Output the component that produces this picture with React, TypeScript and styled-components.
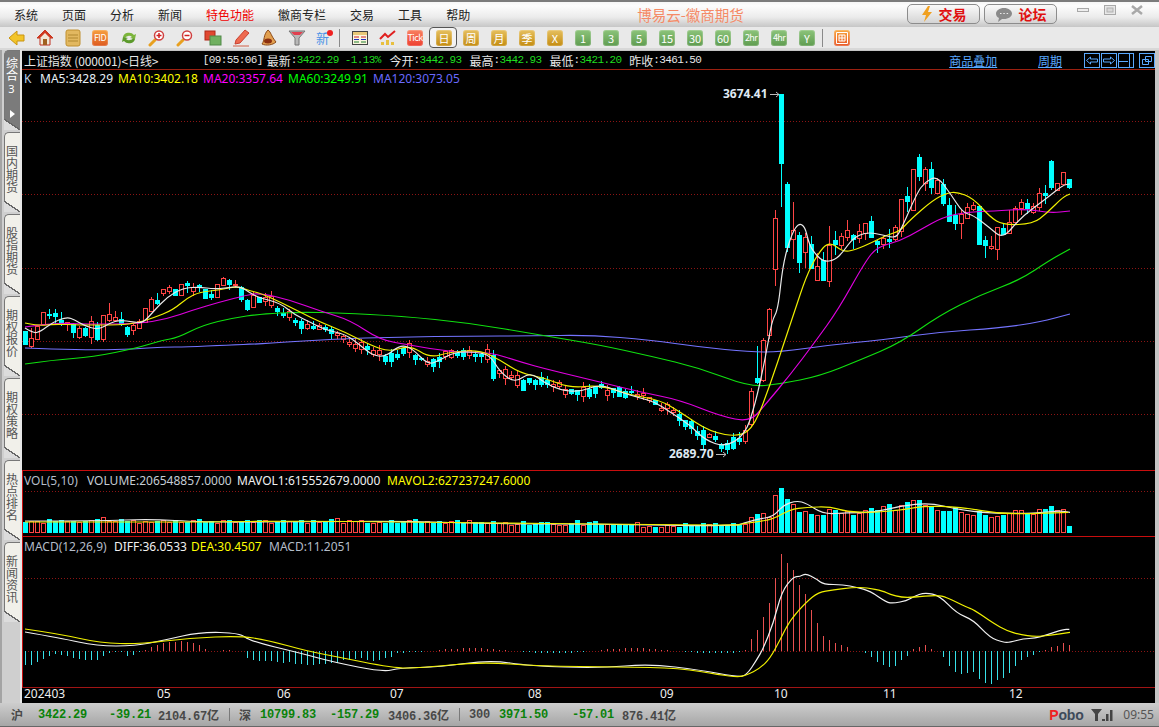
import React from "react";
import styled, { createGlobalStyle } from "styled-components";

const Global = createGlobalStyle`
  html, body { margin: 0; padding: 0; background: #c4c4c4; }
  * { box-sizing: border-box; }
`;
const CJK = `"Noto Sans CJK SC", "Noto Sans", sans-serif`;
const UI = `"Noto Sans", "Noto Sans CJK SC", sans-serif`;
const MONO = `"Liberation Mono", "Noto Sans CJK SC", monospace`;

const Window = styled.div`
  width: 1159px; height: 727px; overflow: hidden; display: flex; flex-direction: column;
  background: #c4c4c4; font-family: ${CJK}; font-size: 12px;
`;
const TitleBar = styled.div`
  height: 27px; flex: none; display: flex; align-items: center; padding-left: 14px;
  border-top: 2px solid #7c7c7c;
  background: linear-gradient(#f6f6f6 0%, #fdfdfd 15%, #ececec 60%, #c6c6c6 100%);
`;
const Menu = styled.nav`display: flex; gap: 24px; color: #222; font-size: 12px; line-height: 16px;`;
const MenuItem = styled.span<{ $hot?: boolean }>`color: ${p => (p.$hot ? "#f00000" : "#222")};`;
const AppTitle = styled.div`margin-left: 167px; color: #f58a66; font-size: 14.5px; white-space: nowrap;`;
const Actions = styled.div`margin-left: auto; display: flex; gap: 4px; margin-top: -1px;`;
const ActionButton = styled.button`
  width: 73px; height: 20px; padding: 0; display: flex; align-items: center; justify-content: center; gap: 6px;
  border: 1px solid #8c8c8c; border-radius: 5px; color: #e01010; font: 700 14px ${CJK};
  background: linear-gradient(#fafafa, #d4d4d4);
`;
const Controls = styled.div`width: 90px; margin-left: 12px; padding-right: 9px; display: flex; height: 24px; margin-top: -10px;`;
const Control = styled.span`flex: 1; display: flex; align-items: center; justify-content: center;`;

const Toolbar = styled.div`
  height: 23px; flex: none; display: flex; align-items: center; padding-left: 8px;
  background: #e9e9e9; border-bottom: 2px solid #d8d8d8;
`;
const Slot = styled.span<{ $selected?: boolean }>`
  width: 28px; height: 21px; flex: none; display: flex; align-items: center; padding-left: ${p => (p.$selected ? 6 : 0)}px;
  margin-left: ${p => (p.$selected ? -6 : 0)}px; margin-right: ${p => (p.$selected ? 6 : 0)}px;
  ${p => p.$selected && "border: 1px solid #555; border-radius: 4px; background:#f3f3f3;"}
`;
const Sep = styled.span`width: 1px; height: 18px; background: #8a8a8a; flex: none; margin: 0 11px 0 -5px;`;
const Chip = styled.span<{ $c: string; $d: string; $narrow?: boolean }>`
  width: 16px; height: 16px; border-radius: 3px; display: flex; align-items: center; justify-content: center;
  background: linear-gradient(${p => p.$c}, ${p => p.$d}); color: #fff; line-height: 16px; white-space: nowrap; overflow: hidden;
  font: ${p => (p.$narrow ? "9px" : "11px")} ${CJK};
  ${p => p.$narrow && "letter-spacing:-0.6px;"}
  box-shadow: inset 0 0 0 1px rgba(255,255,255,.18);
`;
const NewMark = styled.span`position: relative; color: #4b93e6; font-size: 13px; line-height: 16px;
  &::after { content: ""; position: absolute; width: 6px; height: 6px; border-radius: 50%; background: #f02020; right: -4px; top: 0; }`;

const Main = styled.div`flex: 1; min-height: 0; display: flex; background: #c4c4c4;`;
const Rail = styled.div`
  width: 22px; flex: none; padding-left: 4px; display: flex; flex-direction: column; gap: 2px;
  background: linear-gradient(90deg, #a4a4a4 0 2px, #cfcfcf 2px 20px, #e6e6e6 20px);
`;
const Tab = styled.div<{ $active?: boolean }>`
  width: 16px; height: 80px; flex: none; position: relative; padding-top: ${p => (p.$active ? 6 : 12)}px;
  display: flex; flex-direction: column; align-items: center;
  border-radius: 5px 0 0 0; border-top: 1px solid #777; border-left: 1px solid #777;
  background: ${p => (p.$active ? "#7b7b7b" : "#f1f0ea")}; color: ${p => (p.$active ? "#fff" : "#555")};
  &::after {
    content: ""; position: absolute; left: -1px; right: 0; bottom: 0; height: 11px;
    background: linear-gradient(to top right, #dcdcdc 0 46%, #666 46% 54%, ${p => (p.$active ? "#7b7b7b" : "#f1f0ea")} 54%);
  }
`;
const TabText = styled.span`writing-mode: vertical-rl; text-orientation: upright; font-size: 12px; line-height: 14px; letter-spacing: 0.2px; margin-left: -2px;`;
const TabNum = styled.span`font: 11px ${UI}; line-height: 14px; margin-top: 1px; margin-left: -2px;`;
const TabArrow = styled.span`
  position: absolute; left: 5px; top: 59px; width: 0; height: 0;
  border-left: 5px solid #fff; border-top: 4px solid transparent; border-bottom: 4px solid transparent;
`;

const ChartPanel = styled.section`width: 1133px; flex: none; margin-top: 1px; background: #000; display: flex; flex-direction: column; position: relative;`;
const InfoRow = styled.header`
  height: 19px; flex: none; display: flex; align-items: center; padding-left: 2px; border-bottom: 1px solid #9c2010;
  color: #e6e6e6; font-size: 12px; white-space: nowrap;
`;
const Symbol = styled.span`width: 179px; font-size: 12px; letter-spacing: -0.1px;`;
const Mono = styled.span<{ $c?: string; $w?: number }>`
  font: 11px ${MONO}; letter-spacing: -0.6px; color: ${p => p.$c || "#e6e6e6"};
  ${p => p.$w && `width: ${p.$w}px;`}
`;
const Quote = styled.span<{ $w: number }>`width: ${p => p.$w}px; display: flex; align-items: center;`;
const Spacer = styled.span`width: 232px; flex: none;`;
const LinkText = styled.a<{ $w: number }>`width: ${p => p.$w}px; color: #5aa9ff; text-decoration: underline; font-size: 12px;`;
const Tools = styled.span`display: flex; gap: 1px;`;
const ToolBtn = styled.span<{ $gap?: boolean }>`width: 16px; height: 15px; display: block; ${p => p.$gap && "margin-left: 4px;"}`;

const Plot = styled.div`flex: 1; position: relative; min-height: 0;`;
const Chart = styled.svg`display: block; width: 1133px; height: 633px;`;
const Legend = styled.div<{ $top: number }>`
  position: absolute; left: 2px; top: ${p => p.$top}px; display: flex; font: 12px/16px ${UI}; white-space: nowrap;
`;
const LegendItem = styled.span<{ $c: string; $w: number }>`color: ${p => p.$c}; width: ${p => p.$w}px;`;
const Peak = styled.span<{ $x: number; $y: number }>`
  position: absolute; left: ${p => p.$x}px; top: ${p => p.$y}px; color: #dfe8f2; font: 700 12px/14px ${UI}; white-space: nowrap;
`;
const DateTick = styled.span<{ $x: number }>`position: absolute; left: ${p => p.$x}px; top: 616px; color: #eee; font: 12px/16px ${UI};`;

const StatusBar = styled.footer`
  height: 24px; flex: none; display: flex; align-items: center; padding-left: 11px; position: relative;
  background: linear-gradient(#cdcdcd, #a6a6a6); border-bottom: 1px solid #666; white-space: nowrap;
`;
const Cell = styled.span<{ $w: number; $c?: string }>`
  width: ${p => p.$w}px; flex: none; color: ${p => p.$c || "#484848"};
  font: 700 12px ${MONO}; letter-spacing: -0.2px;
`;
const Pipe = styled.span`width: 1px; height: 13px; background: #7a7a7a; flex: none; margin-right: 9px;`;
const Right = styled.div`margin-left: auto; display: flex; align-items: center; padding-right: 5px;`;
const Pobo = styled.span`font: 700 14px/16px "Liberation Sans", sans-serif; color: #3d4a5a; width: 42px; letter-spacing: -0.2px;`;
const PoboP = styled.b`color: #f02020;`;
const Clock = styled.span`font: 12px/16px ${UI}; color: #555; margin-left: 10px;`;

/* ---------- data, in page coordinates ---------- */
const X = (i: number) => 25.5 + 6 * i;
const smooth = (a: number[][]): string => {
  let d = `M${a[0][0]} ${a[0][1]}`;
  for (let k = 1; k < a.length - 1; k++) {
    const mx = (a[k][0] + a[k + 1][0]) / 2, my = (a[k][1] + a[k + 1][1]) / 2;
    d += `Q${a[k][0]} ${a[k][1]} ${mx} ${my}`;
  }
  const e = a[a.length - 1];
  return `${d}L${e[0]} ${e[1]}`;
};
const interp = (path: number[][], x: number) => {
  for (let k = 1; k < path.length; k++) {
    if (x <= path[k][0]) {
      const [x0, y0] = path[k - 1], [x1, y1] = path[k];
      return y0 + ((y1 - y0) * (x - x0)) / (x1 - x0);
    }
  }
  return path[path.length - 1][1];
};
let seed = 12345;
const rnd = () => { seed = (seed * 1103515245 + 12345) & 0x7fffffff; return seed / 0x7fffffff; };

// [up, bodyTop, bodyBottom, high, low]
type C = [number, number, number, number, number];
const Y0 = 270;
const L = (u: number, t: number, b: number, h?: number, l?: number): C => [u, Y0 + t / 3, Y0 + b / 3, Y0 + (h ?? t) / 3, Y0 + (l ?? b) / 3];
const head: C[] = [
  L(0,183,222),L(1,203,228,175,231),L(1,168,206),L(1,127,162),L(0,131,133,117,143),L(0,130,137,118,160),L(0,150,162,126,165),L(1,157,163,155,180),
  L(0,163,186,160,201),L(1,175,201,168,203),L(0,175,195,170,199),L(1,152,200,138,218),L(0,165,207,155,209),L(1,136,207,134,213),L(1,132,150,99,153),L(1,142,150,124,152),
  L(0,148,163,126,165),L(0,171,191,168,197),L(1,165,181,160,193),L(1,152,173,148,175),L(1,114,155),L(1,88,122,81,124),L(0,90,99,69,101),L(1,58,68,56,76),
  L(1,50,64,45,68),L(0,57,75),L(1,42,74),L(0,40,46,32,66),L(1,52,62,40,75),L(0,46,52,42,62),L(0,58,84),L(0,72,82,60,88),
  L(1,43,80),L(1,24,44,20,46),L(0,30,42,28,56),L(1,41,43,30,50),L(0,50,86,48,92),L(0,90,117,88,120),L(1,75,110,65,112),L(0,80,96),
];
const midPath = [[265,298],[290,316],[310,325],[340,334],[360,347],[385,358],[410,350],[430,367],[450,352],[485,352],[500,372],[520,383],[545,380],[570,390],[600,388],[640,396],[670,410],[700,432],[725,445],[745,436]];
const mid: C[] = [];
for (let i = 40; i < 120; i++) {
  const m = interp(midPath, X(i)) + (rnd() - 0.5) * 7;
  const h = 1.5 + rnd() * rnd() * 13;
  const t = m - h / 2, b = m + h / 2;
  mid.push([rnd() > 0.5 ? 1 : 0, t, b, t - rnd() * 6, b + rnd() * 6]);
}
mid[78 - 40] = [0, 355, 378, 350, 380];
mid[117 - 40] = [0, 443, 449, 440, 453];
const tail: C[] = [
  [1,430,441,425,443],[1,391,424,388,425],[0,378,382,346,383],[1,340,380,338,381],[1,309,335,308,338],
  [1,218,269,210,285],[0,94,163,94,206],[0,184,247,182,251],[1,230,239,202,258],[0,235,262,232,272],[1,237,252,233,267],[0,244,268,236,268],[1,266,280,253,280],[0,260,280,252,280],[1,245,281,226,286],
  [0,240,244,231,254],[1,236,245,233,248],[1,230,237,220,240],[0,235,239,234,248],[1,231,238,224,242],[1,223,233,223,239],[0,221,237,216,237],[0,241,244,240,252],[1,238,244,236,248],[0,239,241,229,247],[1,227,239,225,240],
  [1,199,231,199,236],[0,196,201,187,211],[1,169,210,169,210],[0,157,176,154,180],[1,169,183,167,190],[0,169,187,162,193],[1,180,193,178,193],[0,184,203,179,205],[0,205,221,198,221],[0,215,223,205,229],[1,214,223,210,238],[1,207,218,203,218],[1,205,209,202,210],
  [0,206,244,206,244],[0,240,245,236,257],[1,246,248,236,249],[1,227,249,227,259],[0,228,234,224,234],[1,222,233,210,233],[1,208,222,206,222],[1,202,208,199,214],[0,203,208,199,213],[1,206,212,203,213],[1,193,207,188,210],[0,193,195,185,203],[0,161,187,160,189],[1,183,190,183,190],[1,172,184,172,184],[0,179,187,179,188],
];
const candles: C[] = [...head, ...mid, ...tail];

const volTail = [133,112,102,100,110,45,24,57,72,96,94,102,105,104,88,90,100,94,105,100,90,84,90,78,72,90,76,66,60,60,75,78,90,92,92,82,95,102,105,92,104,111,108,106,100,90,90,98,102,87,87,78,90,88,138];
const volTop = (i: number) => {
  if (i >= 120) return 480 + volTail[i - 120] / 3;
  const x = X(i);
  const base = x > 640 ? 525 : x > 480 ? 523 : 521;
  return Math.round(base + (rnd() - 0.5) * 4) - (rnd() > 0.93 ? 3 : 0);
};
const macdTail = [510,477,450,410,369,295,222,249,270,315,342,390,430,468,480,489,495,501,514,513,519,531,546,555,561,558,540,528,507,501,495,507,514,531,558,576,582,579,576,597,609,612,600,594,579,558,540,531,525,516,510,501,498,489,495];
const macdHead = [75,75,67,57,47,42,46,47,53,57,59,60,59,48,39,36,35,48,44,36,30,22,16,10,7,7,3,7,8,15,27,32,33,31,31,33,34,55,60,63,62,62,65,70,65,72,72,75,75,72,72,68,68,60,60,58,55,60,62,60,55,52,40,38,37,36,35];
const macdVal = (i: number) => {
  if (i >= 120) return 480 + macdTail[i - 120] / 3;
  const z = 651.3;
  if (i < macdHead.length) return z + (macdHead[i] - 34) / 3;
  return z + Math.sin(i / 4.3) * 2.5 - 0.5;
};
const Z = (a: number[][]) => a.map(p => [740 + p[0] / 3, 480 + p[1] / 3]);

const ma5 = [[25,328],[33,333],[40,332],[53,322],[67,317],[75,320],[83,325],[98,330],[110,323],[120,320],[133,322],[143,323],[153,312],[167,297],[183,288],[200,287],[213,289],[227,288],[240,286],[250,293],[260,298],[280,303],[295,315],[310,322],[325,330],[345,334],[360,345],[372,355],[385,357],[400,345],[412,348],[428,365],[440,360],[455,352],[475,352],[490,355],[500,372],[515,383],[530,372],[545,383],[560,390],[580,392],[600,384],[620,392],[640,398],[655,402],[670,412],[690,425],[705,440],[725,447],[745,435],[755,405],[765,360],[772,320],[778,310],[783,263],[792,233],[799,223],[805,227],[808,240],[812,250],[823,262],[835,260],[843,252],[853,238],[867,232],[883,235],[895,238],[900,232],[917,193],[925,182],[937,176],[950,193],[963,213],[973,215],[990,228],[1003,239],[1020,218],[1047,198],[1063,185],[1070,184]];
const ma10 = [[25,323],[40,326],[53,324],[80,325],[120,325],[137,323],[153,318],[173,310],[187,298],[200,292],[220,290],[237,286],[250,291],[260,293],[280,302],[300,312],[320,322],[345,332],[370,345],[390,352],[410,345],[430,358],[450,352],[480,350],[500,360],[520,373],[545,378],[570,388],[600,385],[630,395],[660,400],[680,412],[710,432],[740,437],[755,425],[770,385],[785,340],[795,310],[806,277],[817,255],[829,241],[843,252],[855,250],[873,242],[887,235],[900,231],[910,220],[933,200],[947,193],[957,192],[973,198],[990,217],[1003,225],[1033,224],[1047,213],[1063,197],[1070,194]];
const ma20 = [[25,327],[53,323],[87,324],[137,324],[167,319],[193,310],[220,302],[247,295],[260,293],[290,300],[320,311],[350,320],[380,340],[410,345],[450,352],[490,352],[520,362],[550,370],[600,382],[640,392],[680,400],[720,416],[750,422],[765,405],[790,375],[815,342],[838,310],[865,262],[877,247],[900,241],[920,230],[943,217],[967,212],[993,211],[1027,209],[1050,213],[1070,211]];
const ma60 = [[25,364],[53,360],[93,357],[137,348],[163,340],[177,338],[203,325],[233,318],[260,314],[300,312],[340,313],[400,316],[470,323],[540,335],[600,345],[650,356],[700,368],[750,387],[780,384],[820,376],[860,360],[900,343],[940,315],[980,295],[1020,280],[1050,260],[1070,249]];
const ma120 = [[25,348],[53,349],[97,350],[133,349],[163,347],[187,347],[227,345],[260,344],[330,339],[400,337],[470,336],[530,336],[590,335],[650,340],[700,347],[750,352],[780,352],[830,345],[880,340],[940,332],[1000,328],[1040,322],[1070,314]];
const vol1 = [[25,521],[100,521],[150,519],[200,522],[300,522],[400,521],[500,524],[600,524],[700,526],[738,525],...Z([[0,133],[50,118],[100,110],[130,75],[170,62],[200,70],[250,103],[320,98],[400,98],[480,78],[570,68],[650,88],[750,100],[880,100],[960,92],[990,97]])];
const vol2 = [[25,522],[100,522],[200,522],[300,521],[400,522],[500,523],[600,524],[700,525],[738,525],...Z([[0,133],[50,125],[100,118],[150,88],[200,82],[270,80],[320,95],[400,98],[500,88],[550,78],[660,80],[780,102],[900,100],[985,97]])];
const diff = [[25,632],[60,638],[97,646],[135,646],[165,640],[200,632],[240,633],[250,641],[300,653],[333,662],[383,672],[400,668],[440,667],[490,660],[530,666],[600,668],[650,664],[700,670],[738,677],...Z([[20,585],[50,540],[70,505],[100,430],[125,335],[160,290],[180,290],[197,280],[230,297],[250,313],[310,314],[350,322],[390,333],[440,367],[460,370],[500,362],[520,350],[555,337],[600,348],[650,400],[700,420],[750,473],[790,487],[810,487],[850,476],[885,475],[920,465],[970,448],[988,448]])];
const dea = [[25,629],[60,634],[100,643],[140,644],[190,638],[240,636],[267,640],[307,651],[333,656],[393,668],[420,668],[480,662],[540,666],[620,667],[680,668],[720,675],[738,677],...Z([[20,586],[60,565],[90,535],[120,480],[150,420],[200,365],[235,337],[280,330],[340,322],[380,323],[430,333],[450,343],[485,352],[520,352],[590,345],[620,352],[680,382],[700,388],[760,430],[800,452],[840,464],[885,470],[930,466],[990,457]])];

const RED = "#ff4545";
const CYAN = "#00ffff";

const candleNodes = candles.map((c, i) => {
  const [up, t, b, h, l] = c;
  const x = X(i), col = up ? RED : CYAN;
  const top = Math.round(t) + 0.5, bot = Math.max(Math.round(b), Math.round(t) + 1) + 0.5;
  return (
    <g key={i}>
      <line x1={x} x2={x} y1={Math.round(h)} y2={top} stroke={col} />
      <line x1={x} x2={x} y1={bot} y2={Math.round(l) + 1} stroke={col} />
      <rect x={x - 2} y={top} width={4} height={bot - top} fill={up ? "#000" : col} stroke={col} />
    </g>
  );
});
const volNodes = candles.map((c, i) => {
  const t = Math.round(volTop(i)) + 0.5, up = c[0], x = X(i);
  return <rect key={i} x={x - 2} y={t} width={4} height={532.5 - t} fill={up ? "#000" : CYAN} stroke={up ? RED : CYAN} />;
});
const macdNodes = candles.map((_, i) => {
  const v = macdVal(i);
  const x = X(i);
  return <line key={i} x1={x} x2={x} y1={651} y2={v} stroke={v < 651 ? "#e85050" : "#38e0e8"} />;
});

const Dotted = ({ y }: { y: number }) => <line x1={22} x2={1155} y1={y + 0.5} y2={y + 0.5} stroke="#8c1414" strokeDasharray="1 2" />;
const Solid = ({ y, c = "#c80e0e" }: { y: number; c?: string }) => <line x1={22} x2={1155} y1={y + 0.5} y2={y + 0.5} stroke={c} />;
const Line = ({ p, c, w = 1.2 }: { p: number[][]; c: string; w?: number }) => <path d={smooth(p)} fill="none" stroke={c} strokeWidth={w} />;

/* ---------- toolbar icons ---------- */
const Ico = ({ children, w = 18 }: { children: React.ReactNode; w?: number }) => <svg width={w} height={18} viewBox="0 0 18 18">{children}</svg>;
const Back = () => <Ico><path d="M1 9 9 2v4h7v6H9v4z" fill="#f2c428" stroke="#c99410" /></Ico>;
const Home = () => <Ico><path d="M9 1 1 9h3v7h10V9h3z" fill="#f0e8d8" stroke="#c03020" /><path d="M9 1 1 9h3l5-5 5 5h3z" fill="#d03a20" /><rect x="7" y="10" width="4" height="6" fill="#a06020" /></Ico>;
const Note = () => <Ico><rect x="2" y="1" width="14" height="16" rx="2" fill="#e2b860" stroke="#c09030" /><path d="M4 6h10M4 9h10M4 12h10" stroke="#b08830" /></Ico>;
const Fid = () => <Chip $c="#f7a040" $d="#dd5a20" $narrow>FID</Chip>;
const Refresh = () => <Ico><path d="M3 8a6 5 0 0 1 11-2l2-1-1 5-5-1 2-1a4 3 0 0 0-7 1z" fill="#7cb53c" /><path d="M15 10a6 5 0 0 1-11 2l-2 1 1-5 5 1-2 1a4 3 0 0 0 7-1z" fill="#5c9a2c" /></Ico>;
const Lens = ({ plus }: { plus?: boolean }) => (
  <Ico>
    <path d="M7 11 2 16" stroke="#e8a020" strokeWidth="3" strokeLinecap="round" />
    <circle cx="11" cy="6.500" r="4.500" fill="#fff" stroke="#d04040" strokeWidth="1.500" />
    <path d="M8.500 6.500h5" stroke="#d02020" strokeWidth="1.500" />
    {plus && <path d="M11 4v5" stroke="#d02020" strokeWidth="1.500" />}
  </Ico>
);
const Wins = () => <Ico><rect x="1" y="2" width="10" height="9" fill="#e04830" stroke="#b02818" /><rect x="6" y="7" width="11" height="9" fill="#70b060" stroke="#508a48" /></Ico>;
const Pen = () => <Ico><path d="M4 11 13 1l4 3-9 10-5 1z" fill="#ee6a50" stroke="#c84030" /><path d="M1 17h16" stroke="#d06048" /></Ico>;
const Bell = () => <Ico><path d="M8 1c3 2 3 6 8 12-3 3-10 4-14 2C5 11 3 6 8 1z" fill="#e2a050" stroke="#8c4a18" /><ellipse cx="8" cy="12" rx="4" ry="2.500" fill="#8c3010" /></Ico>;
const Funnel = () => <Ico><path d="M1 2h16l-6 7v7H7V9z" fill="#b8b8b8" stroke="#777" /><path d="M3 3h12l-3 3H6z" fill="#e04050" /></Ico>;
const Table = () => <Ico><rect x="1.500" y="2.500" width="15" height="13" fill="#fbf6e0" stroke="#444" /><path d="M2 3h14v3H2z" fill="#e8c878" /><path d="M3 8h5M10 8h5" stroke="#d02020" /><path d="M3 10.500h5M10 10.500h5" stroke="#2030c0" /><path d="M3 13h5M10 13h5" stroke="#208030" /></Ico>;
const Trend = () => <Ico><path d="M2 16v-3h3v3zM7 16v-5h3v5zM12 16v-3h3v3z" fill="#e8c040" /><path d="M1 10 6 5l3 3 7-6" fill="none" stroke="#e02020" strokeWidth="2" /></Ico>;
const Frame = () => <Chip $c="#f8a840" $d="#e85828"><svg width="12" height="12" viewBox="0 0 12 12"><path d="M.5.500h11v11H.5zM3 3h6v6H3zM6 3v6M3 6h6" fill="none" stroke="#fff" /></svg></Chip>;

const G = (t: string, narrow?: boolean) => <Chip $c="#8cc47a" $d="#5f9c50" $narrow={narrow}>{t}</Chip>;
const Gold = (t: string) => <Chip $c="#e6c060" $d="#c48c10">{t}</Chip>;

const ArrowBox = ({ k }: { k: string }) => (
  <svg width="16" height="15" viewBox="0 0 16 15">
    <rect x=".5" y=".5" width="15" height="14" fill="none" stroke="#5aa9ff" />
    {k === "l" && <path d="M2.500 7.500 6.500 4v2h7v3h-7v2z" fill="none" stroke="#5aa9ff" />}
    {k === "r" && <path d="M13.500 7.500 9.500 4v2h-7v3h7v2z" fill="none" stroke="#5aa9ff" />}
    {k === "s" && <path d="M1 8.500h9M11.500 1v13" fill="none" stroke="#5aa9ff" />}
    {k === "w" && <path d="M6.500 3.500h6v5h-6zM3.500 6.500h6v5h-6z" fill="#000" stroke="#5aa9ff" />}
  </svg>
);

const tabs = ["国内期货", "股指期货", "期权报价", "期权策略", "热点排名", "新闻资讯"];
const menu = ["系统", "页面", "分析", "新闻", "特色功能", "徽商专栏", "交易", "工具", "帮助"];
const quotes: [string, string, number, string][] = [
  ["今开", "3442.93", 80, "#1fdc1f"], ["最高", "3442.93", 80, "#1fdc1f"], ["最低", "3421.20", 80, "#1fdc1f"], ["昨收", "3461.50", 88, "#e6e6e6"],
];
const dates: [string, number][] = [["202403", 2], ["05", 135], ["06", 255], ["07", 368], ["08", 506], ["09", 638], ["10", 752], ["11", 861], ["12", 987]];
const G1 = "#0a820a";

export default function App() {
  return (
    <Window>
      <Global />
      <TitleBar>
        <Menu>{menu.map(m => <MenuItem key={m} $hot={m === "特色功能"}>{m}</MenuItem>)}</Menu>
        <AppTitle>博易云-徽商期货</AppTitle>
        <Actions>
          <ActionButton>
            <svg width="12" height="16" viewBox="0 0 12 16"><path d="M7 0 1 9h4l-2 7 8-10H7l2-6z" fill="#f0a020" /></svg>交易
          </ActionButton>
          <ActionButton>
            <svg width="18" height="15" viewBox="0 0 18 15"><path d="M9 1c4.500 0 8 2.500 8 5.500S13.500 12 9 12H7l-4 3 1-4C2 10 1 8.500 1 6.500 1 3.500 4.500 1 9 1z" fill="#8a8a8a" /><path d="M5 6.500h1.500M8.300 6.500h1.500M11.600 6.500h1.500" stroke="#eee" /></svg>论坛
          </ActionButton>
        </Actions>
        <Controls>
          <Control><svg width="12" height="6" viewBox="0 0 12 6"><rect x=".5" y="1.500" width="11" height="3" fill="#eee" stroke="#a8a8a8" /></svg></Control>
          <Control><svg width="12" height="10" viewBox="0 0 12 10"><rect x=".5" y=".5" width="11" height="9" fill="#e8e8e8" stroke="#a8a8a8" /><rect x="3" y="3" width="6" height="4" fill="#d8d8d8" stroke="#b0b0b0" /></svg></Control>
          <Control><svg width="12" height="10" viewBox="0 0 12 10"><path d="M1 1l10 8M11 1 1 9" stroke="#a8a8a8" strokeWidth="2.500" /></svg></Control>
        </Controls>
      </TitleBar>
      <Toolbar>
        <Slot><Back /></Slot><Slot><Home /></Slot><Slot><Note /></Slot><Slot><Fid /></Slot><Slot><Refresh /></Slot>
        <Slot><Lens plus /></Slot><Slot><Lens /></Slot><Slot><Wins /></Slot><Slot><Pen /></Slot><Slot><Bell /></Slot><Slot><Funnel /></Slot>
        <Slot><NewMark>新</NewMark></Slot><Sep />
        <Slot><Table /></Slot><Slot><Trend /></Slot>
        <Slot><Chip $c="#f88060" $d="#ee4030" $narrow>Tick</Chip></Slot>
        <Slot $selected>{Gold("日")}</Slot>
        <Slot>{Gold("周")}</Slot><Slot>{Gold("月")}</Slot><Slot>{Gold("季")}</Slot><Slot>{Gold("X")}</Slot>
        <Slot>{G("1")}</Slot><Slot>{G("3")}</Slot><Slot>{G("5")}</Slot><Slot>{G("15")}</Slot><Slot>{G("30")}</Slot><Slot>{G("60")}</Slot>
        <Slot>{G("2hr", true)}</Slot><Slot>{G("4hr", true)}</Slot><Slot>{G("Y")}</Slot><Sep />
        <Slot><Frame /></Slot>
      </Toolbar>
      <Main>
        <Rail>
          <Tab $active>
            <TabText>综合</TabText><TabNum>3</TabNum><TabArrow />
          </Tab>
          {tabs.map(t => <Tab key={t}><TabText>{t}</TabText></Tab>)}
        </Rail>
        <ChartPanel>
          <InfoRow>
            <Symbol>上证指数 (000001)&lt;日线&gt;</Symbol>
            <Mono $w={64}>[09:55:06]</Mono>
            <Quote $w={123}>最新<Mono>:</Mono><Mono $c="#1fdc1f">3422.29 -1.13%</Mono></Quote>
            {quotes.map(([l, v, w, c]) => (
              <Quote key={l} $w={w}>{l}<Mono>:</Mono><Mono $c={c}>{v}</Mono></Quote>
            ))}
            <Spacer />
            <LinkText $w={89}>商品叠加</LinkText>
            <LinkText $w={46}>周期</LinkText>
            <Tools>
              <ToolBtn><ArrowBox k="l" /></ToolBtn><ToolBtn><ArrowBox k="r" /></ToolBtn><ToolBtn><ArrowBox k="s" /></ToolBtn>
              <ToolBtn $gap><ArrowBox k="w" /></ToolBtn>
            </Tools>
          </InfoRow>
          <Plot>
            <Chart viewBox="22 70 1133 633">
              <g shapeRendering="crispEdges">
                {[121, 194, 268, 341, 414, 491, 578, 651].map(y => <Dotted key={y} y={y} />)}
                <Solid y={470} /><Solid y={536} /><Solid y={687} c="#a01414" />
                <line x1={22.5} x2={22.5} y1={470} y2={687} stroke="#c80e0e" />
                {candleNodes}
                {volNodes}
                {macdNodes}
              </g>
              <Line p={ma120} c="#7474ff" />
              <Line p={ma60} c="#10e010" />
              <Line p={ma20} c="#e000e0" />
              <Line p={ma10} c="#f0f000" />
              <Line p={ma5} c="#e8e8e8" />
              <Line p={vol1} c="#e8e8e8" />
              <Line p={vol2} c="#f0f000" />
              <Line p={diff} c="#f0f0f0" />
              <Line p={dea} c="#f0f000" />
              <path d="M770 94.500h9M776 92l3 2.500-3 2.500" fill="none" stroke="#bbb" />
              <path d="M716 454.500h10M723 452l3 2.500-3 2.500" fill="none" stroke="#bbb" />
            </Chart>
            <Legend $top={1}>
              <LegendItem $c="#b8d0e8" $w={16}>K</LegendItem>
              <LegendItem $c="#e8f0f8" $w={78}>MA5:3428.29</LegendItem>
              <LegendItem $c="#ffff00" $w={85}>MA10:3402.18</LegendItem>
              <LegendItem $c="#ff00ff" $w={85}>MA20:3357.64</LegendItem>
              <LegendItem $c="#00ff00" $w={85}>MA60:3249.91</LegendItem>
              <LegendItem $c="#6a6aff" $w={100}>MA120:3073.05</LegendItem>
            </Legend>
            <Legend $top={403}>
              <LegendItem $c="#b4bcc8" $w={63}>VOL(5,10)</LegendItem>
              <LegendItem $c="#c4ccd4" $w={150}>VOLUME:206548857.0000</LegendItem>
              <LegendItem $c="#f0f0f0" $w={150}>MAVOL1:615552679.0000</LegendItem>
              <LegendItem $c="#ffff00" $w={160}>MAVOL2:627237247.6000</LegendItem>
            </Legend>
            <Legend $top={469}>
              <LegendItem $c="#b4bcc8" $w={90}>MACD(12,26,9)</LegendItem>
              <LegendItem $c="#f0f0f0" $w={77}>DIFF:36.0533</LegendItem>
              <LegendItem $c="#ffff00" $w={78}>DEA:30.4507</LegendItem>
              <LegendItem $c="#b4bcc8" $w={100}>MACD:11.2051</LegendItem>
            </Legend>
            <Peak $x={701} $y={17}>3674.41</Peak>
            <Peak $x={647} $y={377}>2689.70</Peak>
            {dates.map(([t, x]) => <DateTick key={t} $x={x}>{t}</DateTick>)}
          </Plot>
        </ChartPanel>
      </Main>
      <StatusBar>
        <Cell $w={27}>沪</Cell><Cell $w={71} $c={G1}>3422.29</Cell><Cell $w={49} $c={G1}>-39.21</Cell><Cell $w={71}>2104.67亿</Cell><Pipe />
        <Cell $w={21}>深</Cell><Cell $w={70} $c={G1}>10799.83</Cell><Cell $w={58} $c={G1}>-157.29</Cell><Cell $w={71}>3406.36亿</Cell><Pipe />
        <Cell $w={30}>300</Cell><Cell $w={73} $c={G1}>3971.50</Cell><Cell $w={50} $c={G1}>-57.01</Cell><Cell $w={60}>876.41亿</Cell>
        <Right>
          <Pobo><PoboP>P</PoboP>obo</Pobo>
          <svg width="22" height="14" viewBox="0 0 22 14"><path d="M0 1h11L7 6v7H4V6z" fill="#444" /><path d="M11 11h3v2h-3zM15 6h2.500v7H15zM19 2h2.500v11H19z" fill="#444" /></svg>
          <Clock>09:55</Clock>
        </Right>
      </StatusBar>
    </Window>
  );
}
